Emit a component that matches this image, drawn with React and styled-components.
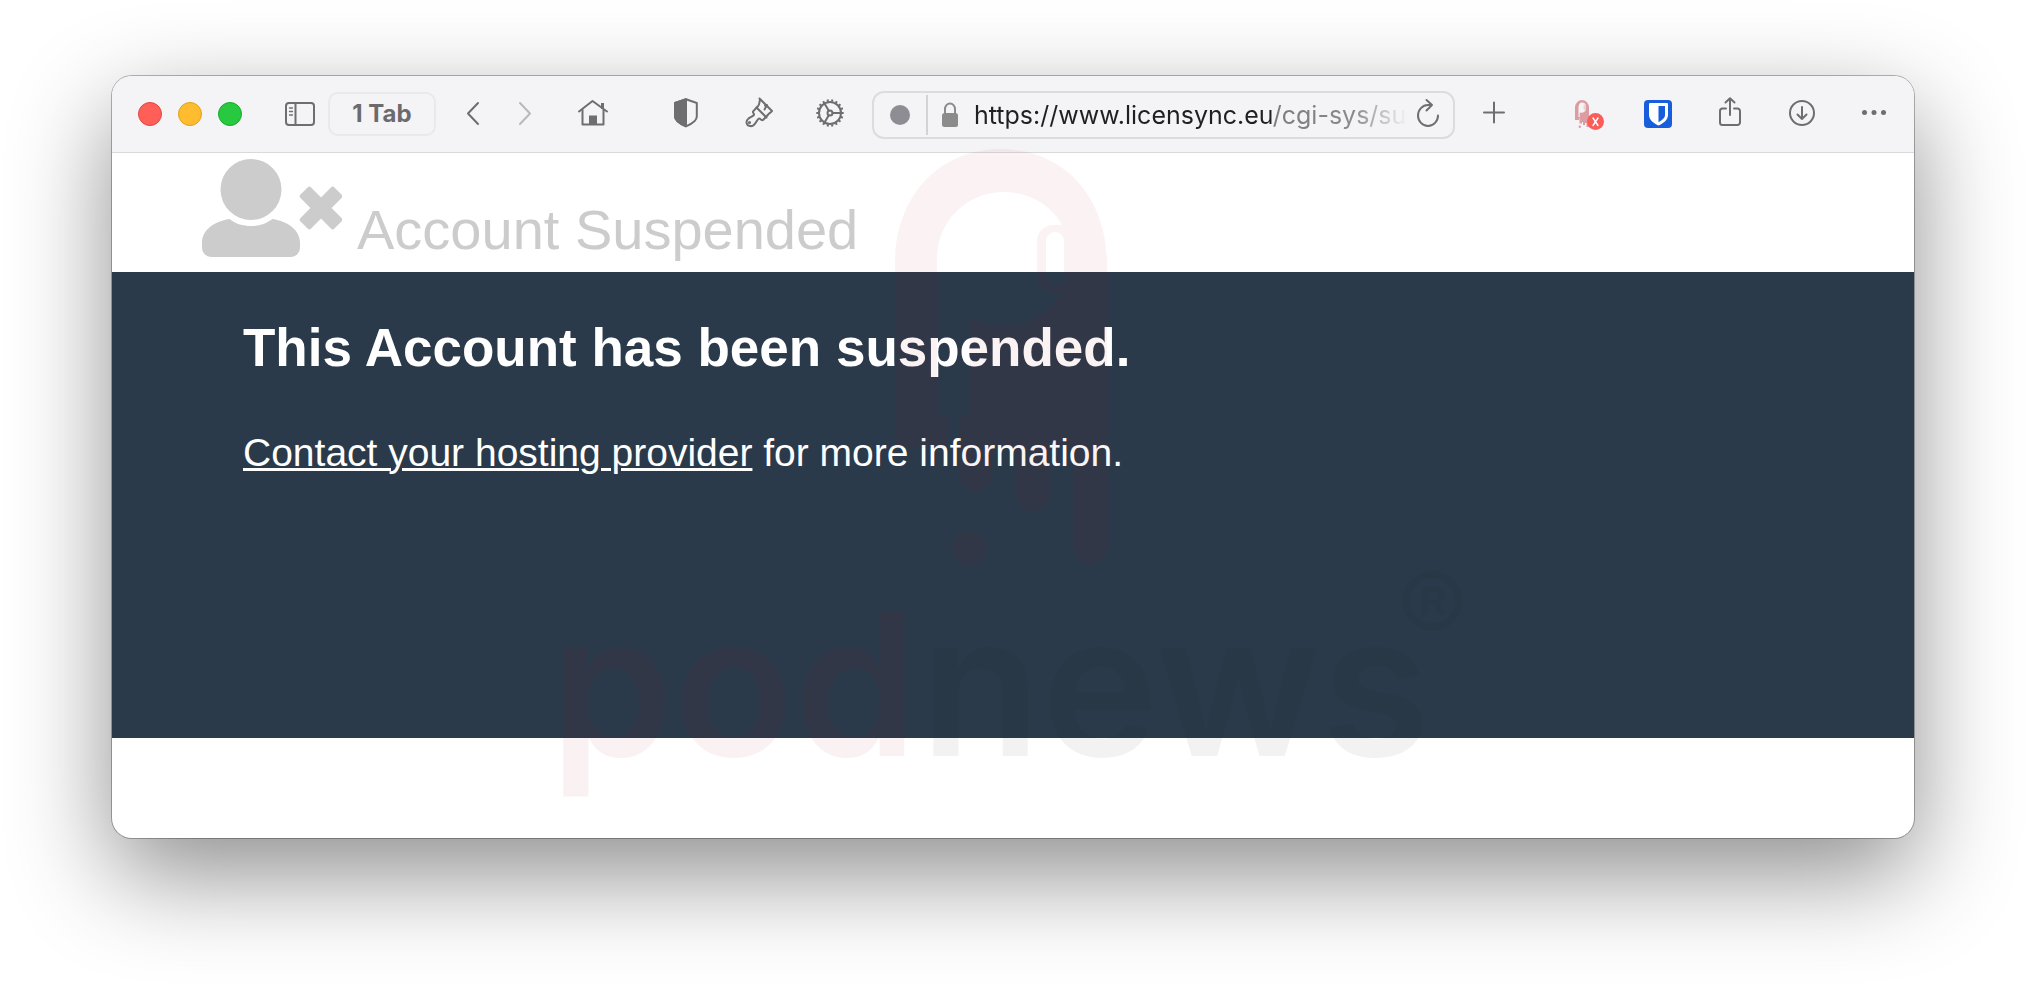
import React from "react";
import styled, { createGlobalStyle } from "styled-components";

const GlobalStyle = createGlobalStyle`
  * { box-sizing: border-box; }
  body {
    margin: 0;
    background: #fff;
    font-family: "Liberation Sans", Arial, sans-serif;
  }
`;

const Desktop = styled.div`
  padding: 76px 112px 148px;
  overflow: hidden;
`;

const BrowserWindow = styled.div`
  position: relative;
  border-radius: 20px;
  background: #fff;
  box-shadow: 0 0 0 1px rgba(0, 0, 0, 0.28), 0 36px 100px rgba(0, 0, 0, 0.45);
  overflow: hidden;
`;

const Toolbar = styled.header`
  display: flex;
  align-items: center;
  height: 77px;
  padding: 0 24px 0 26px;
  background: #f4f4f7;
  border-bottom: 1px solid #d9d9db;
`;

const Group = styled.div`
  display: flex;
  align-items: center;
  gap: ${(p) => p.$gap}px;
  margin-left: ${(p) => p.$before || 0}px;
`;

const plainButton = `
  padding: 0;
  border: 0;
  background: none;
  font: inherit;
`;

const TrafficLight = styled.button`
  ${plainButton}
  width: 24px;
  height: 24px;
  border-radius: 50%;
  background: ${(p) => p.$fill};
  border: 1px solid ${(p) => p.$edge};
`;

const IconButton = styled.button`
  ${plainButton}
  display: block;
  color: ${(p) => (p.$dim ? "#b9b9bb" : "#6e6e70")};

  svg {
    display: block;
    overflow: visible;
  }
`;

const TabGroupButton = styled.button`
  ${plainButton}
  width: 108px;
  height: 44px;
  border: 2px solid #e9e9eb;
  border-radius: 10px;
  color: #6b6b6d;
  font: 700 24px/40px Inter, sans-serif;
`;

const AddressBar = styled.div`
  display: flex;
  flex: 1;
  align-items: center;
  min-width: 0;
  height: 48px;
  margin: 2px 23px 0 26px;
  padding: 0 13px 0 16px;
  border: 2px solid #dcdcde;
  border-radius: 12px;
`;

const SiteDot = styled.span`
  width: 20px;
  height: 20px;
  border-radius: 50%;
  background: #8e8d93;
`;

const Divider = styled.span`
  width: 2px;
  height: 40px;
  margin: 0 14px 0 16px;
  background: #d3d3d5;
`;

const AddressInput = styled.input`
  flex: 1;
  min-width: 0;
  height: 44px;
  margin: 0 6px 0 16px;
  padding: 0;
  border: 0;
  outline: 0;
  color: transparent;
  background: linear-gradient(
    90deg,
    #202022 297px,
    #7b7b7d 298px,
    #8a8a8c 380px,
    rgba(160, 160, 162, 0) 434px
  );
  background-clip: text;
  -webkit-background-clip: text;
  font: 400 25px/44px Inter, sans-serif;
`;

const Banner = styled.div`
  display: flex;
  align-items: flex-end;
  gap: 15px;
  padding: 6px 90px 15px;
  color: #ccc;
`;

const BannerTitle = styled.h1`
  margin: 0;
  font-size: 56px;
  font-weight: 400;
  line-height: 54px;
`;

const Notice = styled.section`
  min-height: 466px;
  padding: 46px 131px;
  background: #2a3a4a;
  color: #fff;
`;

const NoticeTitle = styled.h2`
  margin: 0 0 52px;
  font-size: 53px;
  line-height: 60px;
`;

const NoticeText = styled.p`
  margin: 0;
  font-size: 39px;
  line-height: 46px;

  a {
    color: inherit;
    text-decoration-thickness: 3px;
  }
`;

const PageEnd = styled.div`
  height: 100px;
`;

const Watermark = styled.div`
  position: absolute;
  inset: 70px 0 auto;
  display: flex;
  justify-content: center;
  pointer-events: none;
`;

function Icon({ children, width = 32 }) {
  return (
    <svg
      width={width}
      height="36"
      viewBox={`0 0 ${width} 36`}
      fill="none"
      stroke="currentColor"
      strokeWidth="2"
      strokeLinecap="round"
      strokeLinejoin="round"
      aria-hidden="true"
    >
      {children}
    </svg>
  );
}

function SidebarIcon() {
  return (
    <Icon>
      <rect x="2" y="7" width="28" height="22" rx="3" />
      <path d="M11.500 7v22" />
      <path d="M5.500 12h3M5.500 15.500h3M5.500 19h3" strokeWidth="1.300" />
    </Icon>
  );
}

function HomeIcon() {
  return (
    <Icon>
      <path d="M2 15.500 15.500 5 30 15.500" />
      <path d="M5.500 14v14.500h21V14" />
      <path d="M25.500 7v6" strokeWidth="3" strokeLinecap="butt" />
      <path d="M12 29V19.500h8V29z" fill="currentColor" stroke="none" />
    </Icon>
  );
}

function ShieldIcon() {
  return (
    <Icon>
      <path d="M16 3.200 26.800 7v13.500c0 4.500-5.300 7.500-10.800 9.800C10.500 28 5 25 5 20.500V7z" />
      <path d="M16 3.200V30.300C10.500 28 5 25 5 20.500V7z" fill="currentColor" />
    </Icon>
  );
}

function BrushIcon() {
  return (
    <Icon>
      <path d="M17.500 2.500 30 15c-1 1.800-3.300 2-4 3.800L21 24c-1 .7-2-.2-2.900-1.200-1.300-.9-2.200.3-3.600 2.600-1.300 2.300-3.500 5-6.200 4.700-4-.4-5-5-2-7.400 1.600-1.400 4.300-2.300 5.400-3.400 1.400-1.600-1.500-2.300-.6-3.900l5-5.400c1.600-1.300 1-3.600 1.900-6z" />
      <path d="M14.500 11.500 24.500 21.500" />
      <path d="M22.500 13.500l2.500-4.500-2 .5" />
      <circle cx="7.500" cy="26.500" r=".6" fill="currentColor" />
    </Icon>
  );
}

function GearIcon() {
  const teeth = Array.from({ length: 18 }, (_, i) => i * 20);
  return (
    <Icon>
      <circle cx="16" cy="17" r="11" />
      <circle cx="16" cy="17" r="2.500" />
      <path d="M18.500 17H27M14.800 14.800 10.500 7.500M14.800 19.200 10.500 26.500" />
      {teeth.map((a) => (
        <path
          key={a}
          d="M16 5.500V3.300"
          strokeWidth="2"
          strokeLinecap="butt"
          transform={`rotate(${a + 10} 16 17)`}
        />
      ))}
    </Icon>
  );
}

function LockIcon() {
  return (
    <svg width="16" height="26" viewBox="0 0 16 26" fill="none" aria-hidden="true">
      <path d="M3 12V7a5 5.500 0 0 1 10 0v5" stroke="#8b8b8c" strokeWidth="2" />
      <rect y="11" width="16" height="14" rx="2.500" fill="#8b8b8c" />
    </svg>
  );
}

function PodnewsIcon() {
  return (
    <Icon>
      <g stroke="none">
        <path
          fill="#dc9da2"
          fillRule="evenodd"
          d="M5 24V11.500a7 7.500 0 0 1 14 0V31h-2.500v-4H15v2h-2v-3h-1v1.500H9.500V22H9v2zM8.500 11.500V21h1.200v-4.500C13 17.500 16 15.500 16 12.500V9.500C15.500 7.500 14 6.500 12 6.500c-2.200 0-3.500 2-3.500 5z"
        />
        <rect x="13.500" y="8.500" width="2.500" height="5.500" rx="1.200" fill="#efcfd2" />
        <circle cx="9.800" cy="30.800" r="1.200" fill="#dc9da2" />
        <circle cx="25.500" cy="25.500" r="8.500" fill="#fc5b57" />
        <path d="M23 22l5 7.500M28 22l-5 7.500" stroke="#fff" strokeWidth="1.500" />
      </g>
    </Icon>
  );
}

function BitwardenIcon() {
  return (
    <Icon>
      <g stroke="none">
        <rect x="2" y="4" width="28" height="28" rx="4" fill="#175ddc" />
        <path
          fill="#fff"
          d="M8 7h17q1 0 1 1v11c0 5-5 8.500-9.500 10.500C12 27.500 7 24 7 19V8q0-1 1-1z"
        />
        <path fill="#175ddc" d="M16.500 10H23v9c0 3-3.500 5.500-6.500 7.300z" />
      </g>
    </Icon>
  );
}

function ShareIcon() {
  return (
    <Icon>
      <path d="M12 12.500H8.500a2.500 2.500 0 0 0-2.500 2.500v11.500A2.500 2.500 0 0 0 8.500 29h15a2.500 2.500 0 0 0 2.500-2.500V15a2.500 2.500 0 0 0-2.500-2.500H20" />
      <path d="M16 19V2.500M11.500 6.500 16 2.300l4.500 4.200" />
    </Icon>
  );
}

function DownloadIcon() {
  return (
    <Icon>
      <circle cx="16" cy="17" r="12" />
      <path d="M16 11v12M11.500 18.500 16 23l4.500-4.500" />
    </Icon>
  );
}

function MoreIcon() {
  return (
    <Icon>
      <g fill="currentColor" stroke="none">
        <circle cx="6.500" cy="16.500" r="2.500" />
        <circle cx="16" cy="16.500" r="2.500" />
        <circle cx="25.500" cy="16.500" r="2.500" />
      </g>
    </Icon>
  );
}

function SuspendedUserIcon() {
  return (
    <svg width="140" height="98" viewBox="0 0 140 98" fill="currentColor" aria-hidden="true">
      <circle cx="49" cy="30.500" r="30.500" />
      <path d="M27.500 60C34 65 41 67 49 67s15-2 21.500-7C86 62.500 98 71 98 84v5a9 9 0 0 1-9 9H9a9 9 0 0 1-9-9v-5C0 71 12 62.500 27.500 60z" />
      <g transform="rotate(45 119 49)">
        <rect x="95" y="41.500" width="48" height="15" rx="2.500" />
        <rect x="111.500" y="25" width="15" height="48" rx="2.500" />
      </g>
    </svg>
  );
}

function PodnewsMark() {
  return (
    <svg width="960" height="700" viewBox="-30 0 960 700" aria-label="podnews">
      <g fill="rgb(184, 23, 38)" opacity="0.056">
        <path
          fillRule="evenodd"
          d="M332 302V118C332 48 378 3 438 3s106 45 106 115v284a16.500 16.500 0 0 1-33 0V312a12.500 12.500 0 0 0-25 0v37a16.500 16.500 0 0 1-33 0v-37a12 12 0 0 0-24 0v17a16.500 16.500 0 0 1-33 0V269h11V172q15 8 34 8c25 0 46-14 58-33h-8c-9 0-17-7-17-17V96c0-10 7-17 17-17h8C489 60 466 46 441 46c-38 0-67 30-67 67v156h11v33zM492 86c-5 0-9 4-9 9v36c0 5 4 9 9 9s9-4 9-9V95c0-5-4-9-9-9z"
        />
        <circle cx="406" cy="402" r="17" />
        <text x="-13" y="610" fontFamily="Inter, sans-serif" fontSize="198" fontWeight="600">
          pod
        </text>
      </g>
      <g fill="rgb(20, 30, 20)" opacity="0.05">
        <text x="357" y="610" fontFamily="Inter, sans-serif" fontSize="198" fontWeight="600">
          news
        </text>
        <text x="834" y="503" fontFamily="Inter, sans-serif" fontSize="106" fontWeight="500">
          ®
        </text>
      </g>
    </svg>
  );
}

export default function App() {
  return (
    <>
      <GlobalStyle />
      <Desktop>
        <BrowserWindow>
          <Toolbar>
            <Group $gap={16}>
              <TrafficLight $fill="#ff5f57" $edge="#e2463f" aria-label="Close" />
              <TrafficLight $fill="#febc2e" $edge="#e1a116" aria-label="Minimise" />
              <TrafficLight $fill="#28c840" $edge="#12ac28" aria-label="Zoom" />
            </Group>
            <Group $gap={12} $before={42}>
              <IconButton aria-label="Sidebar">
                <SidebarIcon />
              </IconButton>
              <TabGroupButton>1 Tab</TabGroupButton>
            </Group>
            <Group $gap={20} $before={21}>
              <IconButton aria-label="Back">
                <Icon>
                  <path d="M21 7 11 17.500 21 28" />
                </Icon>
              </IconButton>
              <IconButton $dim aria-label="Forward">
                <Icon>
                  <path d="M11 7 21 17.500 11 28" />
                </Icon>
              </IconButton>
            </Group>
            <Group $gap={0} $before={36}>
              <IconButton aria-label="Home">
                <HomeIcon />
              </IconButton>
            </Group>
            <Group $gap={40} $before={61}>
              <IconButton aria-label="Privacy report">
                <ShieldIcon />
              </IconButton>
              <IconButton aria-label="Clean up">
                <BrushIcon />
              </IconButton>
              <IconButton aria-label="Settings">
                <GearIcon />
              </IconButton>
            </Group>
            <AddressBar>
              <SiteDot />
              <Divider />
              <LockIcon />
              <AddressInput
                aria-label="Address"
                readOnly
                value="https://www.licensync.eu/cgi-sys/suspendedpage.cgi"
              />
              <IconButton aria-label="Reload">
                <Icon width={24}>
                  <path d="M22 18.500a10 10.500 0 1 1-10-10.500h4M10.500 3 16 8l-5.500 5.500" />
                </Icon>
              </IconButton>
            </AddressBar>
            <IconButton aria-label="New tab">
              <Icon>
                <path d="M6 16.500h20M16 6.500v20" />
              </Icon>
            </IconButton>
            <Group $gap={40} $before={60}>
              <IconButton aria-label="Podnews">
                <PodnewsIcon />
              </IconButton>
              <IconButton aria-label="Bitwarden">
                <BitwardenIcon />
              </IconButton>
              <IconButton aria-label="Share">
                <ShareIcon />
              </IconButton>
              <IconButton aria-label="Downloads">
                <DownloadIcon />
              </IconButton>
              <IconButton aria-label="More">
                <MoreIcon />
              </IconButton>
            </Group>
          </Toolbar>
          <main>
            <Banner>
              <SuspendedUserIcon />
              <BannerTitle>Account Suspended</BannerTitle>
            </Banner>
            <Notice>
              <NoticeTitle>This Account has been suspended.</NoticeTitle>
              <NoticeText>
                <a href="#contact">Contact your hosting provider</a> for more information.
              </NoticeText>
            </Notice>
            <PageEnd />
          </main>
          <Watermark>
            <PodnewsMark />
          </Watermark>
        </BrowserWindow>
      </Desktop>
    </>
  );
}
